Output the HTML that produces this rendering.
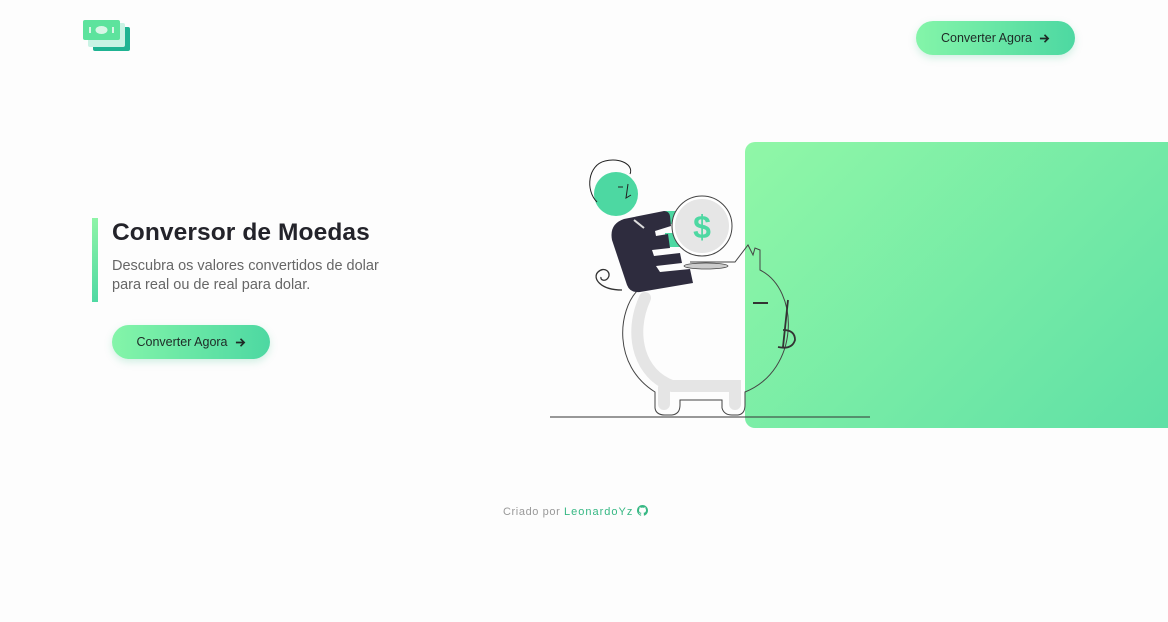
<!DOCTYPE html>
<html><head><meta charset="utf-8">
<style>
*{margin:0;padding:0;box-sizing:border-box}
html,body{width:1168px;height:622px;overflow:hidden;background:#fdfdfd;font-family:"Liberation Sans",sans-serif;position:relative}
.btn{position:absolute;height:34px;border-radius:17px;background:linear-gradient(90deg,#84f5a9,#4dd8a2);color:#1e2a26;font-size:12.5px;display:flex;align-items:center;justify-content:center;gap:7px;box-shadow:0 3px 8px rgba(80,200,150,.25)}
.btn svg{display:block}
.panel{position:absolute;left:745px;top:142px;width:423px;height:286px;border-radius:10px 0 0 10px;background:linear-gradient(135deg,#90f7a7,#5fe0a6)}
.bar{position:absolute;left:92px;top:218px;width:6px;height:84px;background:linear-gradient(#8ef4a7,#4fd9a3)}
h1{position:absolute;left:112px;top:219px;font-size:24.5px;font-weight:bold;color:#23232a;letter-spacing:.1px}
p.sub{position:absolute;left:112px;top:257px;font-size:14.5px;line-height:19px;color:#666}
.foot{position:absolute;left:503px;top:505px;font-size:11px;color:#999;letter-spacing:.6px}
.foot b{color:#37b884;font-weight:normal;letter-spacing:1px}
</style></head><body>
<svg style="position:absolute;left:82px;top:18px" width="52" height="36">
<rect x="11" y="9" width="37" height="24" rx="2" fill="#1fb392"/>
<rect x="6" y="5" width="37" height="24" rx="2" fill="#c9f3e4"/>
<rect x="1" y="2" width="37" height="20" rx="2" fill="#5de39d"/>
<ellipse cx="19.5" cy="12" rx="6" ry="4" fill="#d8f6e6"/>
<rect x="7" y="9" width="2" height="6" fill="#d8f6e6"/><rect x="30" y="9" width="2" height="6" fill="#d8f6e6"/>
</svg>
<div class="btn" style="left:916px;top:21px;width:159px">Converter Agora <svg width="11" height="11" viewBox="0 0 12 12"><path d="M1 6h9M6 2l4 4-4 4" fill="none" stroke="#1e2a26" stroke-width="1.8"/></svg></div>
<div class="panel"></div>
<div class="bar"></div>
<h1>Conversor de Moedas</h1>
<p class="sub">Descubra os valores convertidos de dolar<br>para real ou de real para dolar.</p>
<div class="btn" style="left:112px;top:325px;width:158px">Converter Agora <svg width="11" height="11" viewBox="0 0 12 12"><path d="M1 6h9M6 2l4 4-4 4" fill="none" stroke="#1e2a26" stroke-width="1.8"/></svg></div>
<svg style="position:absolute;left:0;top:0" width="1168" height="622">
<line x1="550" y1="417" x2="870" y2="417" stroke="#333" stroke-width="1"/>
<!-- pig body -->
<path d="M638,290 C618,310 612,365 655,392 L655,408 Q656,415 665,415 L672,415 Q680,414 680,405 L680,400 L722,400 L722,408 Q724,415 732,415 L738,415 Q745,414 745,405 L745,392 C800,370 800,290 760,270 L760,250 L755,248 L753,255 L748,245 L735,262 L690,262" fill="none" stroke="#444" stroke-width="1"/>
<path d="M645,298 C628,335 640,375 672,386 L735,386 L735,404 M664,388 L664,404" fill="none" stroke="#e5e5e5" stroke-width="12" stroke-linecap="round"/>
<line x1="753" y1="303" x2="768" y2="303" stroke="#333" stroke-width="2"/>
<path d="M788,300 L783,347 M783,330 Q795,330 795,340 Q792,350 778,347" fill="none" stroke="#333" stroke-width="1.8"/>
<!-- tail -->
<path d="M622,290 C600,290 592,278 598,272 C604,266 612,272 608,278 C605,282 600,280 601,277" fill="none" stroke="#333" stroke-width="1.3"/>
<!-- tray -->
<ellipse cx="706" cy="266" rx="22" ry="3" fill="#ccc" stroke="#444" stroke-width="0.8"/>
<!-- head -->
<circle cx="616" cy="194" r="22" fill="#4dd8a2"/>
<path d="M597,202 C585,190 588,165 605,161 C620,157 634,165 630,174" fill="none" stroke="#222" stroke-width="1"/>
<path d="M618,187 L623,187 M628,184 L626,198 L631,195" fill="none" stroke="#222" stroke-width="1"/>
<!-- body -->
<rect x="664" y="211" width="12" height="13" fill="#4dd8a2"/>
<rect x="665" y="233" width="15" height="14" fill="#4dd8a2"/>
<path d="M612,240 Q609,224 624,219 L664,211 Q669,211 670,216 L671,226 L655,231 L656,236 L668,234 L670,248 L652,250 L654,256 L680,253 L682,263 L656,266 L660,272 L690,269 L693,283 L640,292 Q630,293 627,285 Z" fill="#2e2c3e"/>
<path d="M634,220 L644,228" stroke="#ddd" stroke-width="2"/>
<!-- coin -->
<circle cx="702" cy="226" r="30" fill="#fff" stroke="#444" stroke-width="1"/>
<circle cx="702" cy="226" r="27" fill="#e6e6e6"/>
<text x="702" y="238" font-family="Liberation Sans" font-size="32" font-weight="bold" fill="#4dd8a2" text-anchor="middle">$</text>
</svg>
<div class="foot">Criado por <b>LeonardoYz</b> <svg width="11" height="11" viewBox="0 0 16 16" style="vertical-align:-1px"><path fill="#37b884" d="M8 0C3.6 0 0 3.6 0 8c0 3.5 2.3 6.5 5.5 7.6.4.1.5-.2.5-.4v-1.4c-2.2.5-2.7-1-2.7-1-.4-.9-.9-1.200-.9-1.2-.7-.5.1-.5.1-.5.8.1 1.2.8 1.2.8.7 1.2 1.9.9 2.3.7.1-.5.3-.9.5-1.1-1.8-.2-3.6-.9-3.6-4 0-.9.3-1.6.8-2.1-.1-.2-.4-1 .1-2.1 0 0 .7-.2 2.2.8.6-.2 1.3-.3 2-.3s1.4.1 2 .3c1.5-1 2.2-.8 2.2-.8.4 1.1.2 1.9.1 2.1.5.6.8 1.3.8 2.1 0 3.1-1.9 3.7-3.6 3.9.3.3.5.8.5 1.5v2.2c0 .2.1.5.6.4C13.7 14.5 16 11.5 16 8c0-4.4-3.6-8-8-8z"/></svg></div>
</body></html>
